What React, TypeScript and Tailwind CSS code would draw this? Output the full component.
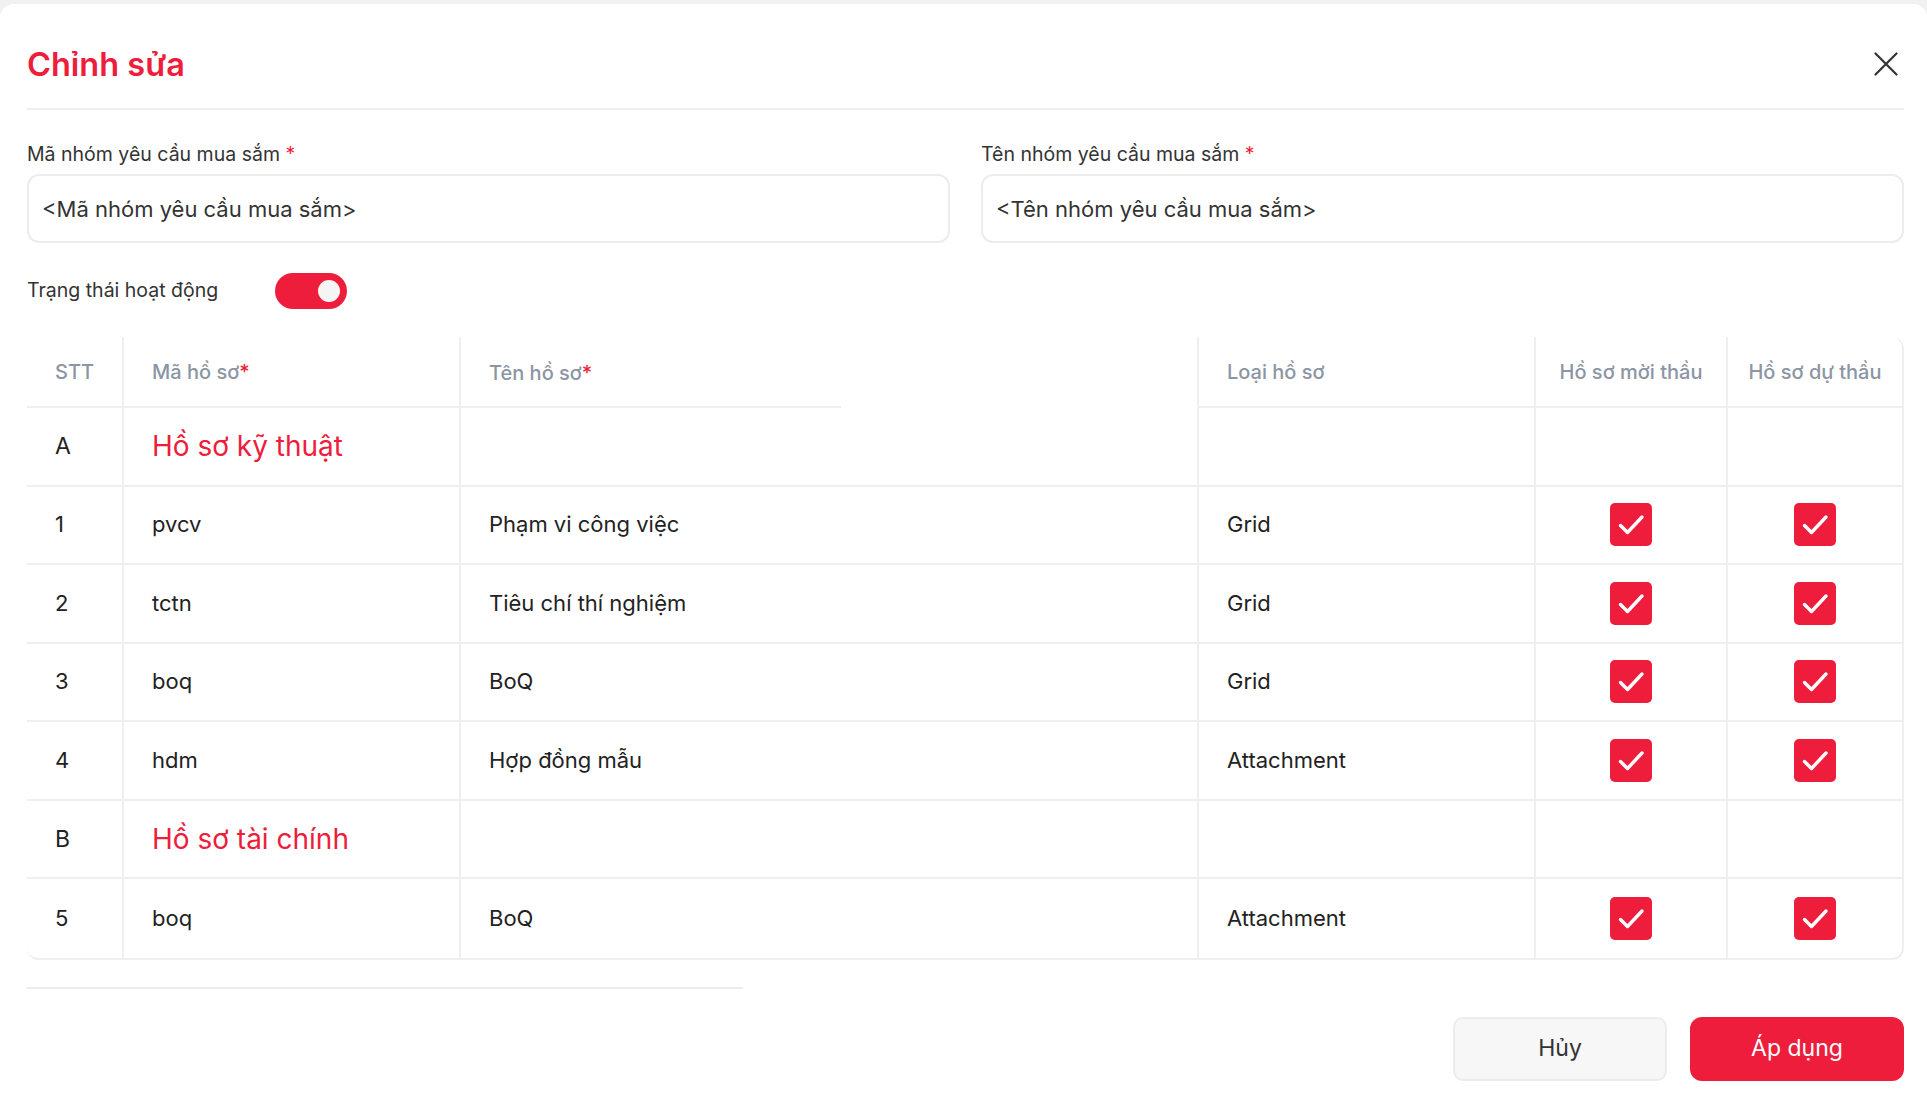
import { useState } from 'react';

type Row = {
  stt: string;
  code: string;
  name?: string;
  type?: string;
  group?: boolean;
};

const rows: Row[] = [
  { stt: 'A', code: 'Hồ sơ kỹ thuật', group: true },
  { stt: '1', code: 'pvcv', name: 'Phạm vi công việc', type: 'Grid' },
  { stt: '2', code: 'tctn', name: 'Tiêu chí thí nghiệm', type: 'Grid' },
  { stt: '3', code: 'boq', name: 'BoQ', type: 'Grid' },
  { stt: '4', code: 'hdm', name: 'Hợp đồng mẫu', type: 'Attachment' },
  { stt: 'B', code: 'Hồ sơ tài chính', group: true },
  { stt: '5', code: 'boq', name: 'BoQ', type: 'Attachment' },
];

function CheckBox() {
  return (
    <div className="w-[42px] h-[43px] rounded-[5px] bg-[#ee1d3b] flex items-center justify-center">
      <svg width="42" height="43" viewBox="0 0 42 43" fill="none">
        <path d="M10.5 22.5 L17.5 29.5 L32 14" stroke="white" strokeWidth="3.4" strokeLinecap="round" strokeLinejoin="round" />
      </svg>
    </div>
  );
}

export default function App() {
  const [active, setActive] = useState(true);

  const cell = 'flex items-center pl-[28px]';

  return (
    <div className="min-h-screen bg-[#f1f1f1] pt-[4px] font-['Inter','Noto_Sans',sans-serif] text-[#222]">
      <div className="bg-white rounded-t-[14px] min-h-[1107px] pl-[27px] pr-[23px] pt-[41px]">
        {/* Header */}
        <div className="flex items-center justify-between h-[40px]">
          <h1 className="text-[32.5px] leading-[40px] font-semibold text-[#ee1d3b]">Chỉnh sửa</h1>
          <button type="button" className="mr-[6px] -mt-[3px]">
            <svg width="24" height="24" viewBox="0 0 24 24" fill="none">
              <path d="M1.5 1.5 L22.5 22.5 M22.5 1.5 L1.5 22.5" stroke="#333" strokeWidth="2.2" strokeLinecap="round" />
            </svg>
          </button>
        </div>
        <div className="mt-[23px] h-[2px] bg-[#efefef]"></div>

        {/* Fields */}
        <div className="grid grid-cols-2 gap-x-[31px] mt-[32px]">
          <div>
            <label className="block text-[19.5px] leading-[24px] text-[#333]">
              Mã nhóm yêu cầu mua sắm <span className="text-[#ee1d3b]">*</span>
            </label>
            <input
              defaultValue="<Mã nhóm yêu cầu mua sắm>"
              className="mt-[8px] w-full h-[69px] rounded-[12px] border-2 border-[#ececec] px-[13px] text-[22px] text-[#333] outline-none"
            />
          </div>
          <div>
            <label className="block text-[19.5px] leading-[24px] text-[#333]">
              Tên nhóm yêu cầu mua sắm <span className="text-[#ee1d3b]">*</span>
            </label>
            <input
              defaultValue="<Tên nhóm yêu cầu mua sắm>"
              className="mt-[8px] w-full h-[69px] rounded-[12px] border-2 border-[#ececec] px-[13px] text-[22px] text-[#333] outline-none"
            />
          </div>
        </div>

        {/* Toggle */}
        <div className="flex items-center h-[36px] mt-[30px]">
          <span className="w-[248px] text-[19.5px] text-[#333]">Trạng thái hoạt động</span>
          <button
            type="button"
            onClick={() => setActive(!active)}
            className={`w-[72px] h-[36px] rounded-full flex items-center px-[7px] ${active ? 'bg-[#ee1d3b] justify-end' : 'bg-gray-300 justify-start'}`}
          >
            <span className="w-[22px] h-[22px] rounded-full bg-[#f5f5f5]"></span>
          </button>
        </div>

        {/* Table */}
        <div className="mt-[28px] border-r-2 border-b-2 border-[#efefef] rounded-r-[12px] rounded-bl-[12px]">
          <div className="grid grid-cols-[95px_337px_738px_337px_192px_1fr] h-[71px] text-[20px] font-medium text-[#8c95a4]">
            <div className={`${cell} border-b-2 border-[#efefef]`}>STT</div>
            <div className={`${cell} border-b-2 border-l-2 border-[#efefef]`}>
              Mã hồ sơ<span className="text-[#ee1d3b]">*</span>
            </div>
            <div className={`${cell} relative border-l-2 border-[#efefef]`}>
              Tên hồ sơ<span className="text-[#ee1d3b]">*</span>
              <span className="absolute -left-[2px] bottom-0 w-[382px] h-[2px] bg-[#efefef]"></span>
            </div>
            <div className={`${cell} border-b-2 border-l-2 border-[#efefef]`}>Loại hồ sơ</div>
            <div className="flex items-center justify-center border-b-2 border-l-2 border-[#efefef]">Hồ sơ mời thầu</div>
            <div className="flex items-center justify-center border-b-2 border-l-2 border-[#efefef]">Hồ sơ dự thầu</div>
          </div>

          {rows.map((r, i) => (
            <div
              key={i}
              className={`grid grid-cols-[95px_337px_738px_337px_192px_1fr] h-[78.5px] text-[22px] ${i < rows.length - 1 ? 'border-b-2 border-[#efefef]' : ''}`}
            >
              <div className={`${cell} ${r.group ? 'text-[23px]' : ''}`}>{r.stt}</div>
              <div className={`${cell} border-l-2 border-[#efefef] ${r.group ? 'text-[28px] text-[#ee1d3b]' : ''}`}>{r.code}</div>
              <div className={`${cell} border-l-2 border-[#efefef]`}>{r.name}</div>
              <div className={`${cell} border-l-2 border-[#efefef]`}>{r.type}</div>
              <div className="flex items-center justify-center border-l-2 border-[#efefef]">{!r.group && <CheckBox />}</div>
              <div className="flex items-center justify-center border-l-2 border-[#efefef]">{!r.group && <CheckBox />}</div>
            </div>
          ))}
        </div>

        {/* Horizontal scrollbar */}
        <div className="mt-[27px] h-[2px] w-[716px] bg-[#ececec]"></div>

        {/* Footer */}
        <div className="mt-[28px] flex justify-end gap-[23px]">
          <button
            type="button"
            className="w-[214px] h-[64px] rounded-[10px] border-2 border-[#ececec] bg-[#f7f7f7] text-[23px] text-[#333]"
          >
            Hủy
          </button>
          <button type="button" className="w-[214px] h-[64px] rounded-[12px] bg-[#ee1d3b] text-[23px] text-white">
            Áp dụng
          </button>
        </div>
      </div>
    </div>
  );
}
